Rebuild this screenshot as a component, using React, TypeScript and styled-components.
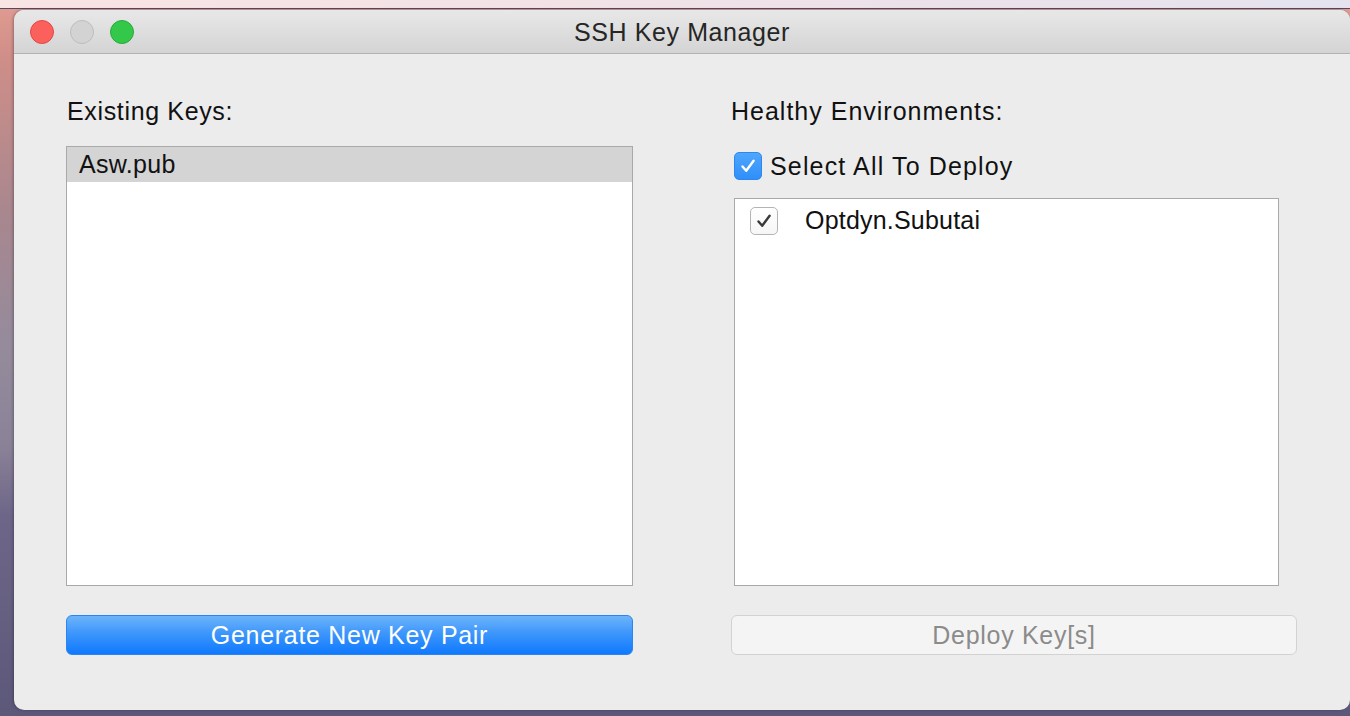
import styled, { createGlobalStyle, css } from "styled-components"

const GlobalStyle = createGlobalStyle`
  html, body {
    margin: 0;
    padding: 0;
    width: 1350px;
    height: 716px;
    overflow: hidden;
  }
  body {
    font-family: "Liberation Sans", Arial, sans-serif;
  }
`

type CheckProps = { $variant: "primary" | "plain" }

const CheckIcon = ({ color }: { color: string }) => (
  <svg width="18" height="18" viewBox="0 0 18 18" fill="none">
    <path
      d="M3.5 9.5 L7.2 13.8 L14.6 3.8"
      stroke={color}
      strokeWidth="2.4"
      strokeLinecap="round"
      strokeLinejoin="round"
    />
  </svg>
)

export default function App() {
  return (
    <Desktop>
      <GlobalStyle />
      <TopStrip />
      <Window>
        <TitleBar>
          <Lights>
            <Light $color="#fc605c" $border="#de4a45" />
            <Light $color="#d3d3d3" $border="#bdbdbd" />
            <Light $color="#34c84a" $border="#28aa3b" />
          </Lights>
          <Title>SSH Key Manager</Title>
        </TitleBar>

        <Body>
          <Column>
            <Heading>Existing Keys:</Heading>
            <ListBox>
              <KeyRow $selected>Asw.pub</KeyRow>
            </ListBox>
            <Button $primary>Generate New Key Pair</Button>
          </Column>

          <Column>
            <Heading $wide>Healthy Environments:</Heading>
            <SelectAll>
              <CheckBox $variant="primary">
                <CheckIcon color="#ffffff" />
              </CheckBox>
              Select All To Deploy
            </SelectAll>
            <ListBox $short>
              <EnvRow>
                <CheckBox $variant="plain">
                  <CheckIcon color="#3a3a3a" />
                </CheckBox>
                Optdyn.Subutai
              </EnvRow>
            </ListBox>
            <Button disabled>Deploy Key[s]</Button>
          </Column>
        </Body>
      </Window>
    </Desktop>
  )
}

const Desktop = styled.div`
  width: 1350px;
  height: 716px;
  display: flex;
  flex-direction: column;
  background: linear-gradient(
    180deg,
    #e29d92 0%,
    #cf8e88 8%,
    #a8878f 30%,
    #958b9c 48%,
    #8a8398 62%,
    #6e6688 72%,
    #5c5879 100%
  );
`

const TopStrip = styled.div`
  height: 8px;
  flex-shrink: 0;
  background: linear-gradient(90deg, #f9e4e4 0%, #f2e2e6 40%, #e4e3ee 100%);
  border-bottom: 1px solid #4d4b68;
`

const Window = styled.div`
  margin: 1px 0 0 14px;
  width: 1336px;
  height: 700px;
  display: flex;
  flex-direction: column;
  background: #ececec;
  border-radius: 10px;
  box-shadow: -1px 0 3px rgba(30, 20, 40, 0.35);
  overflow: hidden;
`

const TitleBar = styled.div`
  position: relative;
  height: 44px;
  flex-shrink: 0;
  display: flex;
  align-items: center;
  justify-content: center;
  padding-top: 2px;
  box-sizing: border-box;
  background: linear-gradient(180deg, #e8e8e8 0%, #d4d4d4 100%);
  border-bottom: 1px solid #b3b3b3;
`

const Lights = styled.div`
  position: absolute;
  left: 16px;
  top: 10px;
  display: flex;
  gap: 16px;
`

const Light = styled.span<{ $color: string; $border: string }>`
  width: 22px;
  height: 22px;
  border-radius: 50%;
  background: ${({ $color }) => $color};
  border: 1px solid ${({ $border }) => $border};
`

const Title = styled.div`
  font-size: 25px;
  color: #262626;
  letter-spacing: 0.6px;
`

const Body = styled.div`
  flex: 1;
  display: grid;
  grid-template-columns: 567px 566px;
  column-gap: 98px;
  padding: 42px 53px 55px 52px;
`

const Column = styled.div`
  display: flex;
  flex-direction: column;
  min-height: 0;
`

const Heading = styled.div<{ $wide?: boolean }>`
  font-size: 25px;
  line-height: 30px;
  color: #111;
  letter-spacing: ${({ $wide }) => ($wide ? "1px" : "0.65px")};
  margin-left: ${({ $wide }) => ($wide ? "0" : "1px")};
`

const ListBox = styled.div<{ $short?: boolean }>`
  flex: 1;
  margin-top: ${({ $short }) => ($short ? "18px" : "20px")};
  background: #fff;
  border: 1px solid #a9a9a9;
  ${({ $short }) =>
    $short &&
    css`
      margin-right: 18px;
      margin-left: 3px;
    `}
`

const KeyRow = styled.div<{ $selected?: boolean }>`
  height: 35px;
  display: flex;
  align-items: center;
  padding-left: 12px;
  font-size: 25px;
  color: #111;
  letter-spacing: 0.3px;
  background: ${({ $selected }) => ($selected ? "#d4d4d4" : "transparent")};
`

const SelectAll = styled.div`
  margin-top: 26px;
  margin-left: 3px;
  display: flex;
  align-items: center;
  gap: 8px;
  height: 28px;
  font-size: 25px;
  color: #111;
  letter-spacing: 1.15px;
`

const CheckBox = styled.span<CheckProps>`
  width: 28px;
  height: 28px;
  box-sizing: border-box;
  border-radius: 5px;
  display: flex;
  align-items: center;
  justify-content: center;
  flex-shrink: 0;
  ${({ $variant }) =>
    $variant === "primary"
      ? css`
          background: linear-gradient(180deg, #4fa6fd 0%, #2f8ff9 100%);
          border: 1px solid #2f86ec;
        `
      : css`
          background: linear-gradient(180deg, #ffffff 0%, #f6f6f6 100%);
          border: 1px solid #b4b4b4;
        `}
`

const EnvRow = styled.div`
  display: flex;
  align-items: center;
  gap: 27px;
  padding: 7px 15px;
  font-size: 25px;
  color: #111;
  letter-spacing: 0.2px;
`

const Button = styled.button<{ $primary?: boolean }>`
  margin-top: 29px;
  height: 40px;
  flex-shrink: 0;
  border-radius: 6px;
  font-family: "Liberation Sans", Arial, sans-serif;
  font-size: 25px;
  letter-spacing: 0.7px;
  padding: 0;
  ${({ $primary }) =>
    $primary
      ? css`
          background: linear-gradient(180deg, #6db4fa 0%, #3d96fb 45%, #0f79fe 100%);
          border: 1px solid #2a84f2;
          color: #fff;
        `
      : css`
          background: #f4f4f4;
          border: 1px solid #d2d2d2;
          color: #8b8b8b;
        `}
`
